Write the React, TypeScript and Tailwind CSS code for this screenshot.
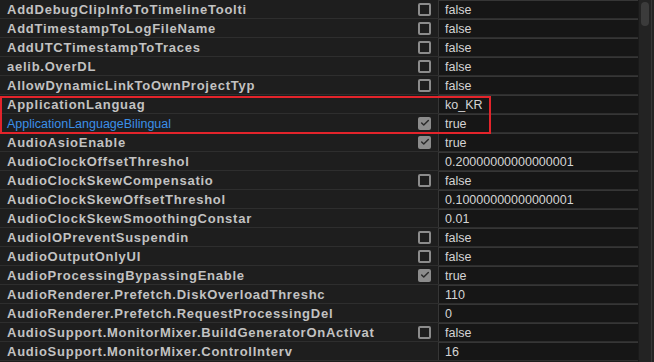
import { Check } from "lucide-react"

type Row = {
    name: string
    value: string
    check?: "on" | "off"
    blue?: boolean
}

const rows: Row[] = [
    { name: "AddDebugClipInfoToTimelineToolti", value: "false", check: "off" },
    { name: "AddTimestampToLogFileName", value: "false", check: "off" },
    { name: "AddUTCTimestampToTraces", value: "false", check: "off" },
    { name: "aelib.OverDL", value: "false", check: "off" },
    { name: "AllowDynamicLinkToOwnProjectTyp", value: "false", check: "off" },
    { name: "ApplicationLanguag", value: "ko_KR" },
    { name: "ApplicationLanguageBilingual", value: "true", check: "on", blue: true },
    { name: "AudioAsioEnable", value: "true", check: "on" },
    { name: "AudioClockOffsetThreshol", value: "0.20000000000000001" },
    { name: "AudioClockSkewCompensatio", value: "false", check: "off" },
    { name: "AudioClockSkewOffsetThreshol", value: "0.10000000000000001" },
    { name: "AudioClockSkewSmoothingConstar", value: "0.01" },
    { name: "AudioIOPreventSuspendin", value: "false", check: "off" },
    { name: "AudioOutputOnlyUI", value: "false", check: "off" },
    { name: "AudioProcessingBypassingEnable", value: "true", check: "on" },
    { name: "AudioRenderer.Prefetch.DiskOverloadThreshc", value: "110" },
    { name: "AudioRenderer.Prefetch.RequestProcessingDel", value: "0" },
    { name: "AudioSupport.MonitorMixer.BuildGeneratorOnActivat", value: "false", check: "off" },
    { name: "AudioSupport.MonitorMixer.ControlInterv", value: "16" },
]

const Box = ({ on }: { on: boolean }) =>
    on ? (
        <div className="w-[13px] h-[13px] rounded-[2px] bg-[#8c8c8c] flex items-center justify-center">
            <Check size={10} strokeWidth={3.5} color="#2a2a2a" />
        </div>
    ) : (
        <div className="w-[13px] h-[13px] rounded-[2px] border-2 border-[#8c8c8c]" />
    )

export default function App() {
    return (
        <div className="relative w-[654px] h-[362px] overflow-hidden bg-[#1e1e1e] flex" style={{ fontFamily: "'Liberation Sans', Arial, sans-serif" }}>
            <div className="w-[638px] flex flex-col">
                {rows.map((r) => (
                    <div key={r.name} className="h-[19px] shrink-0 flex border-b border-[#2e2e2e]">
                        <div className="w-[410px] pl-[7px] pt-[2px] flex items-center overflow-hidden whitespace-nowrap">
                            {r.blue ? (
                                <span className="text-[#3b8fe8] text-[12.5px]">{r.name}</span>
                            ) : (
                                <span className="text-[#c2c2c2] text-[13px] font-bold tracking-[0.75px]">{r.name}</span>
                            )}
                        </div>
                        <div className="w-[28px] flex items-center pl-[8px]">
                            {r.check && <Box on={r.check === "on"} />}
                        </div>
                        <div className="flex-1 bg-[#161616] border-l border-t border-[#363636] flex items-center pl-[6px] pt-[1px] text-[12.5px] text-[#d4d4d4]">
                            {r.value}
                        </div>
                    </div>
                ))}
            </div>
            <div className="w-[16px] bg-[#232323] flex border-l border-[#1a1a1a]">
                <div className="flex-1 pt-[2px] px-[2px]">
                    <div className="h-[24px] rounded-full bg-[#3b3b3b]" />
                </div>
                <div className="w-px bg-[#353535]" />
                <div className="w-[2px]" />
            </div>
            {/* highlight around the language rows */}
            <div className="absolute left-0 top-[96px] w-[491px] h-[38px] border-2 border-[#e3242b] pointer-events-none" />
        </div>
    )
}
